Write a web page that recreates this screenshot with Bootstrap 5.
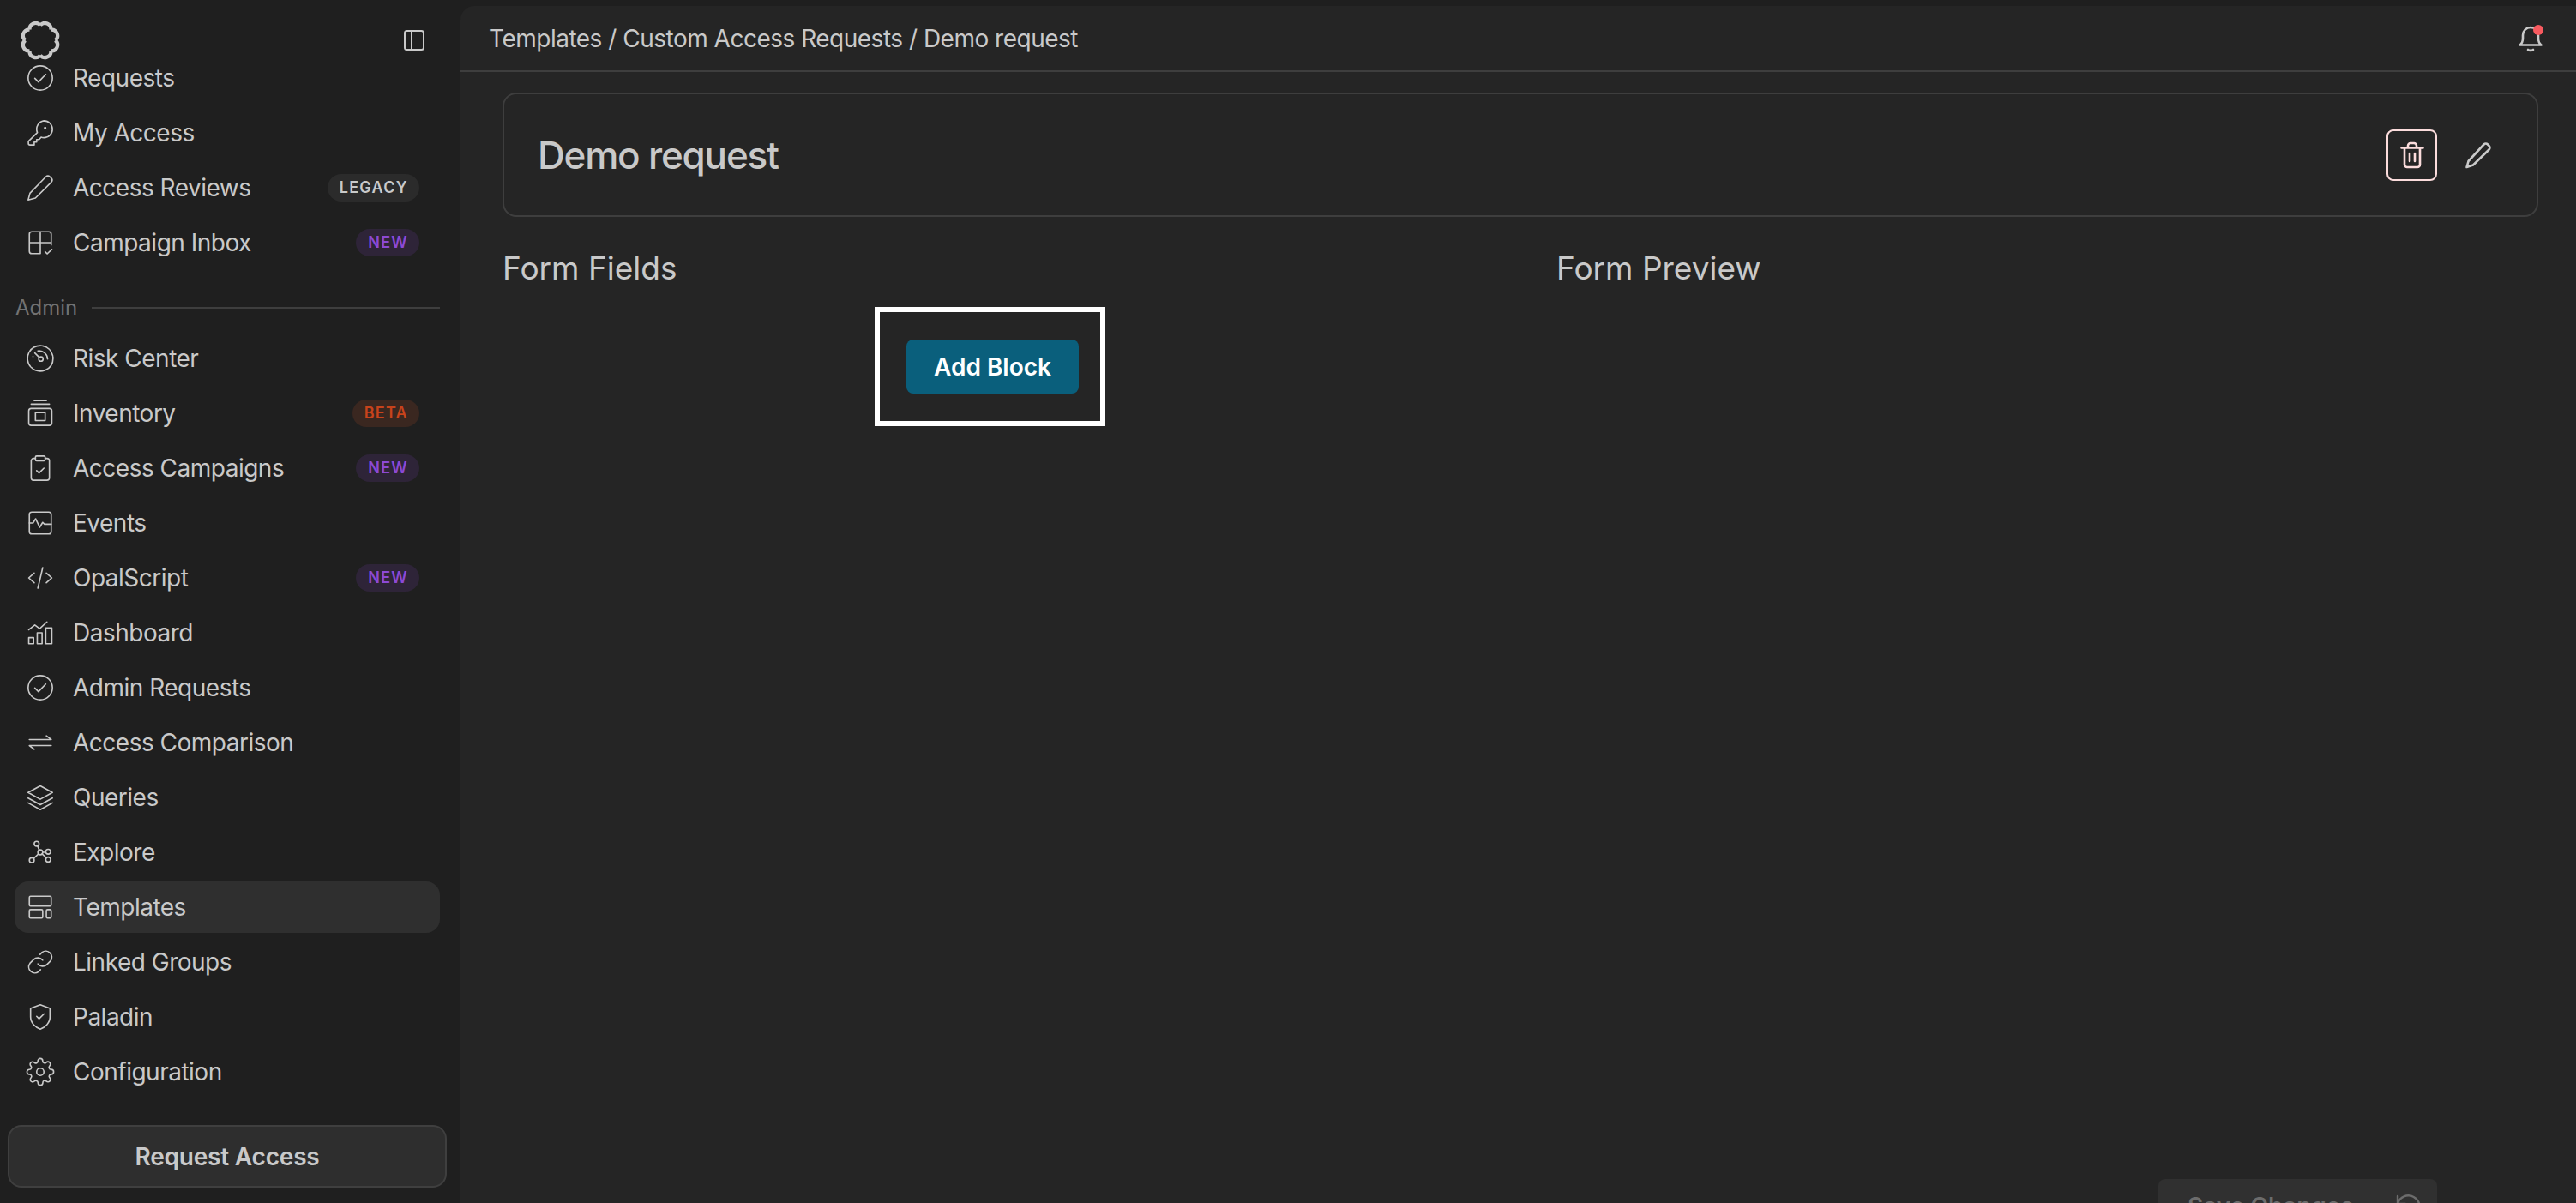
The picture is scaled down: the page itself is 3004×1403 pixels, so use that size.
<!DOCTYPE html>
<html lang="en">
<head>
<meta charset="utf-8">
<title>Demo request</title>
<link href="https://cdn.jsdelivr.net/npm/bootstrap@5.3.0/dist/css/bootstrap.min.css" rel="stylesheet">
<style>
html,body{height:100%;}
body{background:#1f1f1f;color:#c9c9c9;font-family:Inter,"Liberation Sans",sans-serif;font-size:28px;letter-spacing:-.5px;overflow:hidden;}
.app{height:1403px;}
.side{width:537px;flex:0 0 537px;}
.side-head{height:76px;padding:23px 42px 0 23px;}
.logo{width:48px;height:48px;}
.panel-ic{width:24px;height:24px;margin-top:12px;}
.side-scroll{flex:1 1 auto;overflow:hidden;}
.nav-list{margin-top:-15px;}
.nav-row{height:60px;margin:0 24px 4px 17px;padding-left:13px;padding-right:24px;border-radius:16px;gap:21px;white-space:nowrap;}
.nav-row svg{width:34px;height:34px;flex:0 0 34px;}
.ic{fill:none;stroke:#c9c9c9;stroke-width:1.15;stroke-linecap:round;stroke-linejoin:round;}
.nav-row.active{background:#2f2f2f;}
.tag{margin-left:auto;height:32px;line-height:32px;border-radius:16px;padding:0 13px 0 14px;font-size:18px;font-weight:600;letter-spacing:1.3px;}
.tag-legacy{background:#2b2b2b;color:#c9c9c9;}
.tag-new{background:#2e2438;color:#8c49d6;}
.tag-beta{background:#3a2720;color:#c8431b;}
.section{margin:28px 24px 11px 18px;gap:17px;color:#727272;font-size:24px;line-height:36px;letter-spacing:0;}
.section hr{flex:1 1 auto;margin:0;border:0;height:2px;background:#3e3e3e;opacity:1;}
.req-wrap{padding:0 16px 18px 9px;}
.req-btn{height:73px;background:#2e2e2e;border:2px solid #3f3f3f;border-radius:16px;color:#c9c9c9;font-size:28px;font-weight:600;letter-spacing:-.2px;width:100%;}
.main{flex:1 1 auto;margin-top:7px;background:#252525;border-top-left-radius:16px;min-width:0;overflow:hidden;}
.topbar{height:77px;border-bottom:2px solid #3e3e3e;padding:0 37px 0 33px;flex:0 0 auto;}
.bell{position:relative;width:32px;height:32px;}
.bell svg{width:32px;height:32px;display:block;}
.bell-dot{position:absolute;width:12px;height:12px;border-radius:50%;background:#f85a5f;right:1px;top:0;}
.content{flex:1 1 auto;padding:24px 44px 0 49px;}
.title-card{height:145px;border:2px solid #3e3e3e;border-radius:16px;padding:0 39px 0 39px;background:transparent;}
.title-card h1{font-size:44px;font-weight:500;margin:1px 0 0;letter-spacing:-1.2px;color:#c9c9c9;}
.trash-btn{width:59px;height:60px;padding:0;border:2px solid #fbdcdc;border-radius:8px;background:transparent;}
.trash-btn svg,.edit-btn svg{width:32px;height:32px;}
.edit-btn{width:59px;height:60px;padding:0;border:0;background:transparent;margin-left:2px;}
.cols{display:grid;grid-template-columns:1229px 1fr;margin-top:38px;}
.cols h2{font-size:37px;font-weight:400;margin:0;line-height:44px;letter-spacing:0;color:#c9c9c9;}
.callout{display:inline-block;margin:23px 0 0 434px;border:6px solid #fff;padding:32px 25px 32px 31px;}
.add-btn{display:block;width:201px;height:63px;padding:0;background:#0a5f7c;border:0;border-radius:8px;color:#fff;font-size:28px;font-weight:600;letter-spacing:0;}
.foot{height:28px;flex:0 0 auto;overflow:hidden;padding-right:162px;}
.btn.save-btn:disabled{width:325px;height:63px;background:#303030;border:0;border-radius:8px;color:#6c6c6c;opacity:1;font-size:28px;font-weight:600;gap:48px;padding:0 0 0 34px;}
.save-btn svg{width:32px;height:32px;}
</style>
</head>
<body>
<div class="app d-flex">
  <aside class="side d-flex flex-column">
    <div class="side-head d-flex justify-content-between align-items-start">
      <svg class="logo" viewBox="0 0 48 48" fill="none" stroke="#c9c9c9" stroke-width="4.200"><path d="M41.500 24A7 7 0 0 1 36.400 36.400M36.400 36.400A7 7 0 0 1 24 41.500M24 41.500A7 7 0 0 1 11.600 36.400M11.600 36.400A7 7 0 0 1 6.500 24M6.500 24A7 7 0 0 1 11.600 11.600M11.600 11.600A7 7 0 0 1 24 6.500M24 6.500A7 7 0 0 1 36.400 11.600M36.400 11.600A7 7 0 0 1 41.500 24"/></svg>
      <svg class="panel-ic" viewBox="0 0 24 24" fill="none" stroke="#c9c9c9" stroke-width="2"><rect x="1" y="1" width="22" height="22" rx="2.500"/><path d="M9 1v22"/></svg>
    </div>
    <div class="side-scroll">
      <div class="nav-list">
        <div class="nav-row d-flex align-items-center"><svg class="ic" viewBox="0 0 24 24"><circle cx="12" cy="12" r="10"/><path d="M7.500 12.300l3 3 6-6.300"/></svg><span>Requests</span></div>
        <div class="nav-row d-flex align-items-center"><svg class="ic" viewBox="0 0 24 24"><path d="M15 2a7 7 0 0 1 0 14c-.8 0-1.600-.14-2.300-.4L11 17.500H9v2H7V22H3.500a1.300 1.300 0 0 1-1.300-1.300v-1.700l7.400-7.300A7 7 0 0 1 15 2z"/><circle cx="16" cy="8" r=".5"/></svg><span>My Access</span></div>
        <div class="nav-row d-flex align-items-center"><svg class="ic" viewBox="0 0 24 24"><path d="M2 22l1.500-5.500L16.500 3a2.500 2.500 0 0 1 3.500 0l1 1a2.500 2.500 0 0 1 0 3.500L8 20.500z"/></svg><span>Access Reviews</span><span class="tag tag-legacy">LEGACY</span></div>
        <div class="nav-row d-flex align-items-center"><svg class="ic" viewBox="0 0 24 24"><path d="M21 14V5a2 2 0 0 0-2-2H5a2 2 0 0 0-2 2v14a2 2 0 0 0 2 2h7M3 12h18M12 3v18M16 19.500l1.700 1.700 3.800-3.700"/></svg><span>Campaign Inbox</span><span class="tag tag-new">NEW</span></div>
        <div class="section d-flex align-items-center"><span>Admin</span><hr></div>
        <div class="nav-row d-flex align-items-center"><svg class="ic" viewBox="0 0 24 24"><circle cx="12" cy="12" r="10.500" stroke-dasharray="12 .8"/><circle cx="12.500" cy="12.500" r="1.800"/><path d="M7.500 7.500l3.700 3.700M10 5.800a7 7 0 0 1 8 6.700M6 10.500l.01.01"/></svg><span>Risk Center</span></div>
        <div class="nav-row d-flex align-items-center"><svg class="ic" viewBox="0 0 24 24"><path d="M7 1.500h10M4.500 4.500h15"/><rect x="2.500" y="8" width="19" height="14" rx="2"/><rect x="8" y="11.500" width="8" height="6.500"/></svg><span>Inventory</span><span class="tag tag-beta">BETA</span></div>
        <div class="nav-row d-flex align-items-center"><svg class="ic" viewBox="0 0 24 24"><path d="M8 4H6.500a2 2 0 0 0-2 2v14a2 2 0 0 0 2 2h11a2 2 0 0 0 2-2V6a2 2 0 0 0-2-2H16"/><rect x="8" y="2" width="8" height="4" rx="1"/><path d="M9 14l2 2 4-4"/></svg><span>Access Campaigns</span><span class="tag tag-new">NEW</span></div>
        <div class="nav-row d-flex align-items-center"><svg class="ic" viewBox="0 0 24 24"><rect x="3" y="3" width="18" height="18" rx="2"/><path d="M3 12h3l2.200-3.500 3.300 7 2.500-4 1.500 1.500H21"/></svg><span>Events</span></div>
        <div class="nav-row d-flex align-items-center"><svg class="ic" viewBox="0 0 24 24"><path d="M7 8l-4.500 4 4.500 4M17 8l4.500 4-4.500 4M14 3.500l-4 17"/></svg><span>OpalScript</span><span class="tag tag-new">NEW</span></div>
        <div class="nav-row d-flex align-items-center"><svg class="ic" viewBox="0 0 24 24"><path d="M2.500 9.500l5-4 4 3 6-5.500"/><rect x="2.500" y="16" width="4" height="5"/><rect x="9.500" y="12" width="4" height="9"/><rect x="16.500" y="8" width="5" height="13"/></svg><span>Dashboard</span></div>
        <div class="nav-row d-flex align-items-center"><svg class="ic" viewBox="0 0 24 24"><circle cx="12" cy="12" r="10"/><path d="M7.500 12.300l3 3 6-6.300"/></svg><span>Admin Requests</span></div>
        <div class="nav-row d-flex align-items-center"><svg class="ic" viewBox="0 0 24 24"><path d="M3 9.500h18l-4-3M21 14.500H3l4 3"/></svg><span>Access Comparison</span></div>
        <div class="nav-row d-flex align-items-center"><svg class="ic" viewBox="0 0 24 24"><path d="M12 2.500L22 8l-10 5.500L2 8zM2 12.500L12 18l10-5.500M2 16.500L12 22l10-5.500"/></svg><span>Queries</span></div>
        <div class="nav-row d-flex align-items-center"><svg class="ic" viewBox="0 0 24 24"><circle cx="12" cy="12" r="2"/><circle cx="9" cy="5" r="2"/><circle cx="18.500" cy="11.500" r="2"/><circle cx="5" cy="18.500" r="2"/><circle cx="18.500" cy="18" r="2"/><path d="M9.800 6.800l1.300 3.400M14 12h2.500M10.500 13.300l-4 3.800M13.500 13.300l3.500 3.300"/></svg><span>Explore</span></div>
        <div class="nav-row d-flex align-items-center active"><svg class="ic" viewBox="0 0 24 24"><rect x="3" y="3" width="18" height="8" rx="1"/><rect x="3" y="14" width="11" height="7" rx="1"/><rect x="17" y="14" width="4" height="7" rx="1"/></svg><span>Templates</span></div>
        <div class="nav-row d-flex align-items-center"><svg class="ic" viewBox="0 0 24 24"><path d="M10 13.500a5 5 0 0 0 7.500.5l3-3a5 5 0 0 0-7-7l-1.700 1.700M14 10.500a5 5 0 0 0-7.500-.5l-3 3a5 5 0 0 0 7 7l1.700-1.700"/></svg><span>Linked Groups</span></div>
        <div class="nav-row d-flex align-items-center"><svg class="ic" viewBox="0 0 24 24"><path d="M12 2l8 3v7c0 5-4 8.500-8 10-4-1.500-8-5-8-10V5zM9 11.500l2 2 4-4"/></svg><span>Paladin</span></div>
        <div class="nav-row d-flex align-items-center"><svg class="ic" viewBox="0 0 24 24"><path d="M12 15a3 3 0 1 0 0-6 3 3 0 0 0 0 6z"/><path d="M19.400 15a1.650 1.650 0 0 0 .33 1.820l.06.06a2 2 0 0 1 0 2.830 2 2 0 0 1-2.830 0l-.06-.06a1.650 1.650 0 0 0-1.820-.33 1.650 1.650 0 0 0-1 1.510V21a2 2 0 0 1-2 2 2 2 0 0 1-2-2v-.09A1.650 1.650 0 0 0 9 19.400a1.650 1.650 0 0 0-1.820.33l-.06.06a2 2 0 0 1-2.830 0 2 2 0 0 1 0-2.830l.06-.06a1.650 1.650 0 0 0 .33-1.820 1.650 1.650 0 0 0-1.510-1H3a2 2 0 0 1-2-2 2 2 0 0 1 2-2h.09A1.650 1.650 0 0 0 4.600 9a1.650 1.650 0 0 0-.33-1.820l-.06-.06a2 2 0 0 1 0-2.830 2 2 0 0 1 2.830 0l.06.06a1.650 1.650 0 0 0 1.820.33H9a1.650 1.650 0 0 0 1-1.510V3a2 2 0 0 1 2-2 2 2 0 0 1 2 2v.09a1.650 1.650 0 0 0 1 1.510 1.650 1.650 0 0 0 1.820-.33l.06-.06a2 2 0 0 1 2.830 0 2 2 0 0 1 0 2.830l-.06.06a1.650 1.650 0 0 0-.33 1.820V9a1.650 1.650 0 0 0 1.510 1H21a2 2 0 0 1 2 2 2 2 0 0 1-2 2h-.09a1.650 1.650 0 0 0-1.510 1z"/></svg><span>Configuration</span></div>
      </div>
    </div>
    <div class="req-wrap"><button class="btn req-btn" type="button">Request Access</button></div>
  </aside>
  <main class="main d-flex flex-column">
    <header class="topbar d-flex align-items-center justify-content-between">
      <span>Templates / Custom Access Requests / Demo request</span>
      <div class="bell"><svg viewBox="0 0 32 32" fill="none" stroke="#c9c9c9" stroke-width="2.600" stroke-linecap="round" stroke-linejoin="round"><path d="M3.500 23.500c2.500-1.800 3.500-4 3.500-8V12a9 9 0 0 1 18 0v3.500c0 4 1 6.200 3.500 8z"/><path d="M13 29c1.500 1.200 4.500 1.200 6 0"/></svg><span class="bell-dot"></span></div>
    </header>
    <div class="content">
      <div class="title-card card d-flex flex-row align-items-center justify-content-between">
        <h1>Demo request</h1>
        <div class="d-flex align-items-center gap-3">
          <button class="btn trash-btn d-flex align-items-center justify-content-center" type="button" aria-label="Delete"><svg viewBox="0 0 32 32" fill="none" stroke="#fbdcdc" stroke-width="2.600" stroke-linecap="round" stroke-linejoin="round"><path d="M3.500 7.500h25M7 7.500V27a3 3 0 0 0 3 3h12a3 3 0 0 0 3-3V7.500M11 7.500V5a3 3 0 0 1 3-3h4a3 3 0 0 1 3 3v2.500M13 14v9M19 14v9"/></svg></button>
          <button class="btn edit-btn d-flex align-items-center justify-content-center" type="button" aria-label="Edit"><svg viewBox="0 0 32 32" fill="none" stroke="#c9c9c9" stroke-width="2.600" stroke-linecap="round" stroke-linejoin="round"><path d="M2.500 30l2-7L22.500 3.500a3.200 3.200 0 0 1 4.500 0l1.500 1.500a3.200 3.200 0 0 1 0 4.500L10 27.500z"/></svg></button>
        </div>
      </div>
      <div class="cols">
        <div>
          <h2>Form Fields</h2>
          <div class="callout"><button class="btn add-btn" type="button">Add Block</button></div>
        </div>
        <div><h2>Form Preview</h2></div>
      </div>
    </div>
    <div class="foot d-flex justify-content-end">
      <button class="btn save-btn d-flex align-items-center flex-shrink-0" type="button" disabled><span>Save Changes</span><svg viewBox="0 0 32 32" fill="none" stroke="#6c6c6c" stroke-width="2.400" stroke-linecap="round" stroke-linejoin="round"><path d="M3 4v9h9M3 13A13 13 0 1 1 5 24"/></svg></button>
    </div>
  </main>
</div>
<script src="https://cdn.jsdelivr.net/npm/bootstrap@5.3.0/dist/js/bootstrap.bundle.min.js"></script>
</body>
</html>
